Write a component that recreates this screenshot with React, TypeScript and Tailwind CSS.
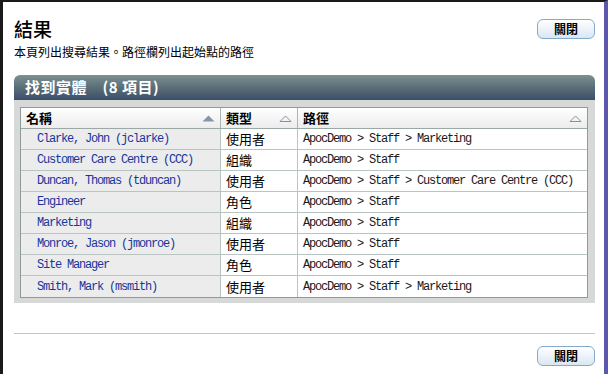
import React from 'react';

interface Entity {
  name: string;
  type: string;
  path: string;
}

const rows: Entity[] = [
  { name: 'Clarke, John (jclarke)', type: '使用者', path: 'ApocDemo > Staff > Marketing' },
  { name: 'Customer Care Centre (CCC)', type: '組織', path: 'ApocDemo > Staff' },
  { name: 'Duncan, Thomas (tduncan)', type: '使用者', path: 'ApocDemo > Staff > Customer Care Centre (CCC)' },
  { name: 'Engineer', type: '角色', path: 'ApocDemo > Staff' },
  { name: 'Marketing', type: '組織', path: 'ApocDemo > Staff' },
  { name: 'Monroe, Jason (jmonroe)', type: '使用者', path: 'ApocDemo > Staff' },
  { name: 'Site Manager', type: '角色', path: 'ApocDemo > Staff' },
  { name: 'Smith, Mark (msmith)', type: '使用者', path: 'ApocDemo > Staff > Marketing' },
];

const cjk = { fontFamily: "'Noto Sans CJK TC', 'Noto Sans', sans-serif" };
const mono = { fontFamily: "'Liberation Mono', 'DejaVu Sans Mono', monospace" };

function SortArrow({ filled }: { filled?: boolean }) {
  return (
    <svg width="13" height="7" viewBox="0 0 13 7" className="shrink-0">
      {filled ? (
        <path d="M0.5 6.5 L6.5 0.5 L12.5 6.5 Z" fill="#8496a8" />
      ) : (
        <path d="M1 6.5 L6.5 1 L12 6.5 Z" fill="none" stroke="#7d93a8" strokeWidth="1" />
      )}
    </svg>
  );
}

function CloseButton() {
  return (
    <button
      className="w-[58px] h-[20px] rounded-[6px] border border-[#86a9c9] bg-gradient-to-b from-white to-[#d9e7f3] text-[12px] font-bold text-black leading-none flex items-center justify-center"
      style={cjk}
    >
      關閉
    </button>
  );
}

export default function App() {
  return (
    <div className="w-[608px] h-[374px] bg-white border-t-2 border-l-[3px] border-r-[4px] border-b-0 border-t-[#1a1a1a] border-l-[#1a1a1a] border-r-[#5b58ad] overflow-hidden">
      <div className="pl-[11px] pr-[9px]">
        {/* Title */}
        <div className="flex justify-between items-start pt-[15px]">
          <div>
            <h1 className="text-[19px] leading-[24px] font-medium text-black" style={cjk}>結果</h1>
            <p className="text-[12px] leading-[16px] mt-[3px] text-black" style={cjk}>
              本頁列出搜尋結果。路徑欄列出起始點的路徑
            </p>
          </div>
          <div className="mt-[2px]">
            <CloseButton />
          </div>
        </div>

        {/* Results panel */}
        <div className="mt-[15px]">
          <div className="h-[25px] rounded-t-[6px] bg-gradient-to-b from-[#7d9191] via-[#5a6e78] to-[#3c4f6a] flex items-center pl-[11px]">
            <span className="text-white text-[15px] font-bold tracking-[0.5px]" style={cjk}>
              找到實體　(8 項目)
            </span>
          </div>
          <div className="bg-[#d6d9d8] pt-[7px] pb-[5px] pl-[6px] pr-[7px]">
            <div className="border border-[#8d9c9a] bg-white">
              {/* Header */}
              <div className="grid grid-cols-[200px_77px_1fr] h-[21px] border-b border-[#9aa8a6] bg-gradient-to-b from-white to-[#ececec]">
                <div className="flex items-center justify-between pl-[5px] pr-[5px] border-r border-[#a9b5b3]">
                  <span className="text-[13px] font-bold text-black" style={cjk}>名稱</span>
                  <SortArrow filled />
                </div>
                <div className="flex items-center justify-between pl-[5px] pr-[5px] border-r border-[#a9b5b3]">
                  <span className="text-[13px] font-bold text-black" style={cjk}>類型</span>
                  <SortArrow />
                </div>
                <div className="flex items-center justify-between pl-[5px] pr-[5px]">
                  <span className="text-[13px] font-bold text-black" style={cjk}>路徑</span>
                  <SortArrow />
                </div>
              </div>

              {/* Rows */}
              {rows.map((r, i) => (
                <div
                  key={r.name}
                  className={`grid grid-cols-[200px_77px_1fr] h-[21px] ${i < rows.length - 1 ? 'border-b border-[#b9c5c2]' : ''}`}
                >
                  <div className="flex items-center pl-[16px] bg-[#ececec] border-r border-[#b9c5c2]">
                    <span className="text-[12px] tracking-[-1.2px] text-[#16369c] whitespace-nowrap" style={mono}>{r.name}</span>
                  </div>
                  <div className="flex items-center pl-[5px] border-r border-[#b9c5c2]">
                    <span className="text-[13px] text-black" style={cjk}>{r.type}</span>
                  </div>
                  <div className="flex items-center pl-[5px]">
                    <span className="text-[12px] tracking-[-1.2px] text-[#1a1a1a] whitespace-nowrap" style={mono}>{r.path}</span>
                  </div>
                </div>
              ))}
            </div>
          </div>
        </div>

        {/* Footer */}
        <div className="mt-[30px] border-t border-[#c4c4c4]" />
        <div className="flex justify-end mt-[12px]">
          <CloseButton />
        </div>
      </div>
    </div>
  );
}
